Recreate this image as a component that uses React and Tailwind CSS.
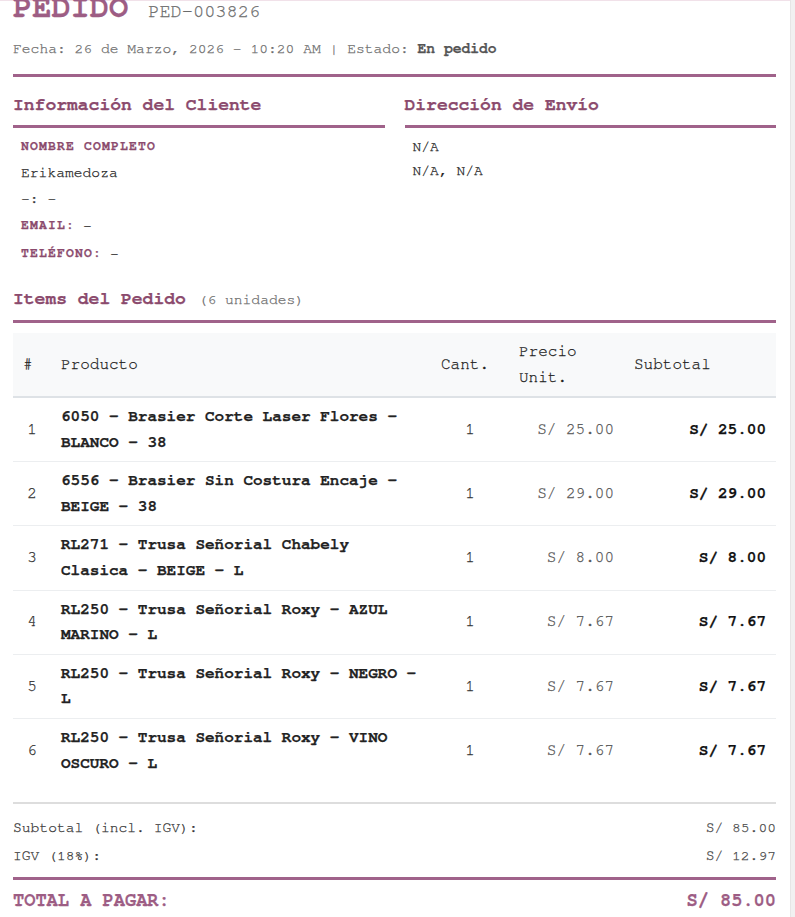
import React from 'react';

const items = [
  { n: 1, name: '6050 - Brasier Corte Laser Flores - BLANCO - 38', qty: 1, price: 'S/ 25.00', sub: 'S/ 25.00' },
  { n: 2, name: '6556 - Brasier Sin Costura Encaje - BEIGE - 38', qty: 1, price: 'S/ 29.00', sub: 'S/ 29.00' },
  { n: 3, name: 'RL271 - Trusa Señorial Chabely Clasica - BEIGE - L', qty: 1, price: 'S/ 8.00', sub: 'S/ 8.00' },
  { n: 4, name: 'RL250 - Trusa Señorial Roxy - AZUL MARINO - L', qty: 1, price: 'S/ 7.67', sub: 'S/ 7.67' },
  { n: 5, name: 'RL250 - Trusa Señorial Roxy - NEGRO - L', qty: 1, price: 'S/ 7.67', sub: 'S/ 7.67' },
  { n: 6, name: 'RL250 - Trusa Señorial Roxy - VINO OSCURO - L', qty: 1, price: 'S/ 7.67', sub: 'S/ 7.67' },
];

function SectionTitle({ children }) {
  return (
    <h2 className="border-b-[3px] border-[#a0628a] pb-[8px] text-[18px] leading-[24px] font-bold text-[#8b4a6d]">
      {children}
    </h2>
  );
}

export default function App() {
  return (
    <div className="flex h-[917px] overflow-hidden bg-white font-['Nimbus_Mono_PS','FreeMono','Courier_New','Courier','Liberation_Mono',monospace] text-[#222] [-webkit-text-stroke:0.25px]">
      <div className="w-[790px] shrink-0 border-t border-[#f1e1e9] pl-[13px] pr-[14px]">
        {/* Header */}
        <header className="border-b-[3px] border-[#a0628a] pb-[15px]">
          <div className="mt-[-10px] flex items-baseline gap-[20px]">
            <h1 className="text-[32px] leading-[32px] font-bold text-[#9d5d84]">PEDIDO</h1>
            <span className="text-[18.67px] text-[#6b6b6b]">PED-003826</span>
          </div>
          <p className="mt-[13px] text-[14.67px] leading-[20px] text-[#6b6b6b]">
            Fecha: 26 de Marzo, 2026 - 10:20 AM | Estado: <span className="font-bold text-[#555]">En pedido</span>
          </p>
        </header>

        {/* Cliente / Envio */}
        <div className="mt-[16px] grid grid-cols-2 gap-x-[20px]">
          <div>
            <SectionTitle>Información del Cliente</SectionTitle>
            <div className="pt-[6px] pl-[8px] text-[14.67px]">
              <div className="flex h-[26px] items-center text-[13px] font-bold tracking-[1.2px] text-[#8b4a6d]">NOMBRE COMPLETO</div>
              <div className="flex h-[26px] items-center">Erikamedoza</div>
              <div className="flex h-[26px] items-center text-[#333]">-: -</div>
              <div className="flex h-[28px] items-center gap-[8px]">
                <span className="text-[13px] font-bold tracking-[1.2px] text-[#8b4a6d]">EMAIL:</span>
                <span>-</span>
              </div>
              <div className="flex h-[28px] items-center gap-[8px]">
                <span className="text-[13px] font-bold tracking-[1.2px] text-[#8b4a6d]">TELÉFONO:</span>
                <span>-</span>
              </div>
            </div>
          </div>
          <div>
            <SectionTitle>Dirección de Envío</SectionTitle>
            <div className="pt-[7px] pl-[8px] text-[14.67px]">
              <div className="flex h-[24px] items-center">N/A</div>
              <div className="flex h-[24px] items-center">N/A, N/A</div>
            </div>
          </div>
        </div>

        {/* Items */}
        <div className="mt-[19px]">
          <SectionTitle>
            Items del Pedido <span className="ml-[2px] text-[14.67px] font-normal text-[#6b6b6b]">(6 unidades)</span>
          </SectionTitle>
          <table className="mt-[10px] w-full table-fixed border-collapse text-[16px] leading-[25.6px]">
            <colgroup>
              <col className="w-[38px]" />
              <col className="w-[380px]" />
              <col className="w-[78px]" />
              <col className="w-[115px]" />
              <col />
            </colgroup>
            <thead>
              <tr className="h-[64px] border-b-2 border-[#dee2e6] bg-[#f8f9fa] text-left text-[#222]">
                <th className="px-[10px] font-normal">#</th>
                <th className="px-[10px] font-normal">Producto</th>
                <th className="px-[10px] font-normal">Cant.</th>
                <th className="px-[10px] font-normal">Precio Unit.</th>
                <th className="px-[10px] font-normal">Subtotal</th>
              </tr>
            </thead>
            <tbody>
              {items.map((it) => (
                <tr key={it.n} className="border-b border-[#eceef0] last:border-b-0">
                  <td className="px-[10px] py-[6px] text-center text-[#333]">{it.n}</td>
                  <td className="px-[10px] py-[6px] font-bold text-[#222]">{it.name}</td>
                  <td className="px-[10px] py-[6px] text-center text-[#333]">{it.qty}</td>
                  <td className="px-[10px] py-[6px] text-right text-[#555]">{it.price}</td>
                  <td className="px-[10px] py-[6px] text-right font-bold text-[#111]">{it.sub}</td>
                </tr>
              ))}
            </tbody>
          </table>
        </div>

        {/* Totals */}
        <div className="mt-[20px] border-t-2 border-[#dddddd] pt-[10px] text-[14.67px] text-[#333]">
          <div className="flex h-[28px] items-center justify-between">
            <span>Subtotal (incl. IGV):</span>
            <span className="text-[#444]">S/ 85.00</span>
          </div>
          <div className="flex h-[28px] items-center justify-between">
            <span>IGV (18%):</span>
            <span className="text-[#444]">S/ 12.97</span>
          </div>
          <div className="mt-[7px] flex h-[45px] items-center justify-between border-t-[3px] border-[#a0628a] text-[18.67px] font-bold text-[#9d5d84]">
            <span>TOTAL A PAGAR:</span>
            <span>S/ 85.00</span>
          </div>
        </div>
      </div>
      <div className="w-[5px] shrink-0 border-l border-[#e6e6e6] bg-[#f1f1f1]" />
    </div>
  );
}
